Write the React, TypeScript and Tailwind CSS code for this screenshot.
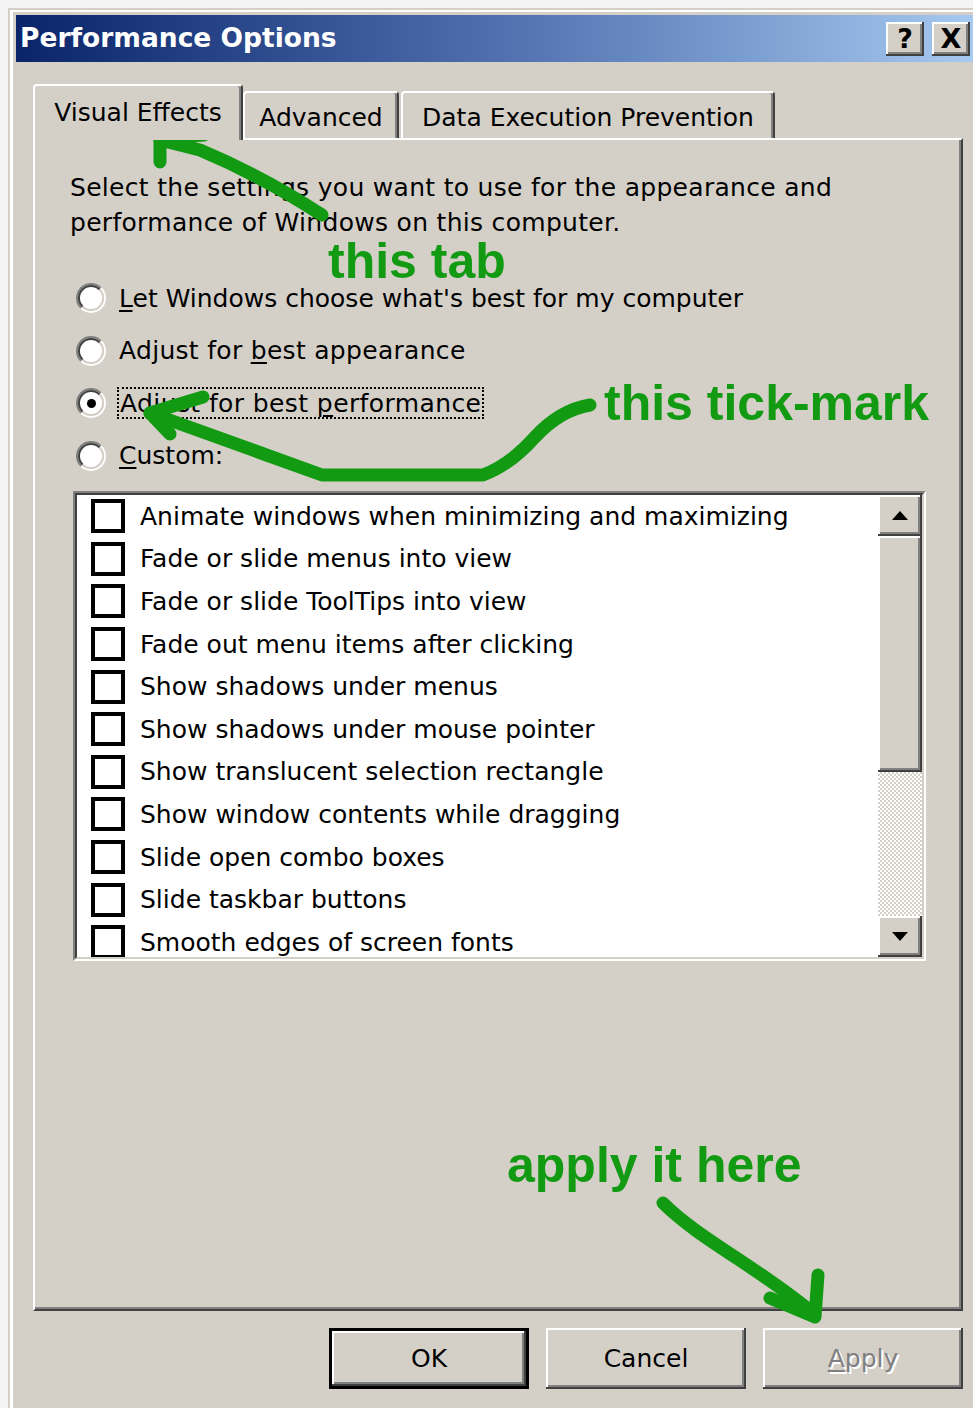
import React from "react";

const raised =
  "shadow-[inset_-2px_-2px_0_#404040,inset_2px_2px_0_#ffffff,inset_-4px_-4px_0_#808080]";

const effects = [
  "Animate windows when minimizing and maximizing",
  "Fade or slide menus into view",
  "Fade or slide ToolTips into view",
  "Fade out menu items after clicking",
  "Show shadows under menus",
  "Show shadows under mouse pointer",
  "Show translucent selection rectangle",
  "Show window contents while dragging",
  "Slide open combo boxes",
  "Slide taskbar buttons",
  "Smooth edges of screen fonts",
];

function Radio({ checked }: { checked?: boolean }) {
  return (
    <span className="flex h-[30px] w-[30px] shrink-0 rounded-full border-2 border-t-[#808080] border-l-[#808080] border-r-white border-b-white">
      <span className="flex h-full w-full items-center justify-center rounded-full border-2 border-t-[#404040] border-l-[#404040] border-r-[#d4d0c8] border-b-[#d4d0c8] bg-white">
        {checked && <span className="h-[9px] w-[9px] rounded-full bg-black" />}
      </span>
    </span>
  );
}

function Key({ children }: { children: React.ReactNode }) {
  return <span className="underline decoration-[2px] underline-offset-[3px]">{children}</span>;
}

function Arrow({ dir }: { dir: "up" | "down" }) {
  return (
    <svg width="16" height="9" viewBox="0 0 16 9">
      {dir === "up" ? <polygon points="0,9 16,9 8,0" fill="#000" /> : <polygon points="0,0 16,0 8,9" fill="#000" />}
    </svg>
  );
}

function Button({ label, primary, disabled }: { label: React.ReactNode; primary?: boolean; disabled?: boolean }) {
  return (
    <div
      className={`flex h-[61px] w-[200px] items-center justify-center bg-[#d4d0c8] ${raised} ${
        primary ? "border-[3px] border-black" : ""
      } ${disabled ? "text-[#808080] [text-shadow:2px_2px_0_#ffffff]" : ""}`}
    >
      {label}
    </div>
  );
}

export default function App() {
  return (
    <div className="relative h-[1408px] w-[973px] overflow-hidden bg-[#f3f3f3] pl-[8px] pt-[8px] font-['DejaVu_Sans',sans-serif] text-[25px] leading-none text-black">
      {/* window frame */}
      <div className="h-[1420px] w-[980px] bg-[#d4d0c8] pl-[2px] pt-[2px]">
        <div className="h-full border-l-[3px] border-t-[2px] border-white pl-[3px] pt-[3px]">
          <div className="w-[960px]">
            {/* title bar */}
            <div className="flex h-[47px] items-center justify-between bg-gradient-to-r from-[#0a246a] via-[#4f6fae] to-[#a6caf0] pl-[4px] pr-[6px]">
              <span className="text-[26.5px] font-bold text-white">Performance Options</span>
              <div className="flex gap-[8px]">
                <div className={`flex h-[34px] w-[38px] items-center justify-center bg-[#d4d0c8] text-[27px] font-bold ${raised}`}>
                  ?
                </div>
                <div className={`flex h-[34px] w-[38px] items-center justify-center bg-[#d4d0c8] text-[27px] font-bold ${raised}`}>
                  X
                </div>
              </div>
            </div>

            <div className="ml-[17px] w-[930px]">
              {/* tabs */}
              <div className="mt-[22px] flex h-[54px] items-end">
                <div className="relative z-10 -mb-[2px] flex h-[56px] w-[210px] items-center justify-center rounded-t-[4px] border-l-2 border-t-2 border-r-2 border-l-white border-t-white border-r-[#404040] bg-[#d4d0c8] pb-[2px] shadow-[inset_-2px_0_0_#808080]">
                  Visual Effects
                </div>
                <div className="flex h-[47px] w-[156px] items-center justify-center rounded-t-[4px] border-l-2 border-t-2 border-r-2 border-l-white border-t-white border-r-[#404040] pt-[4px] shadow-[inset_-2px_0_0_#808080]">
                  Advanced
                </div>
                <div className="ml-[2px] flex h-[47px] w-[374px] items-center justify-center rounded-t-[4px] border-l-2 border-t-2 border-r-2 border-l-white border-t-white border-r-[#404040] pt-[4px] shadow-[inset_-2px_0_0_#808080]">
                  Data Execution Prevention
                </div>
              </div>

              {/* tab page */}
              <div className="h-[1173px] border-2 border-t-white border-l-white border-r-[#404040] border-b-[#404040] pl-[35px] pt-[30px] shadow-[inset_-2px_-2px_0_#808080]">
                <div className="leading-[35px] tracking-[0.3px]">
                  <div>Select the settings you want to use for the appearance and</div>
                  <div>performance of Windows on this computer.</div>
                </div>

                <div className="mt-[32px]">
                  <div className="flex h-[52.5px] items-center pl-[6px]">
                    <Radio />
                    <span className="ml-[13px]">
                      <Key>L</Key>et Windows choose what's best for my computer
                    </span>
                  </div>
                  <div className="flex h-[52.5px] items-center pl-[6px]">
                    <Radio />
                    <span className="ml-[13px] tracking-[0.3px]">
                      Adjust for <Key>b</Key>est appearance
                    </span>
                  </div>
                  <div className="flex h-[52.5px] items-center pl-[6px]">
                    <Radio checked />
                    <span className="ml-[11px] flex h-[32px] items-center border-2 border-dotted border-black px-[1px] tracking-[0.4px]">
                      <span>
                        Adjust for best <Key>p</Key>erformance
                      </span>
                    </span>
                  </div>
                  <div className="flex h-[52.5px] items-center pl-[6px]">
                    <Radio />
                    <span className="ml-[13px]">
                      <Key>C</Key>ustom:
                    </span>
                  </div>
                </div>

                {/* effects list */}
                <div className="ml-[3px] mt-[9px] h-[470px] w-[853px] border-2 border-t-[#808080] border-l-[#808080] border-r-white border-b-white">
                  <div className="flex h-full w-full border-2 border-t-[#404040] border-l-[#404040] border-r-[#d4d0c8] border-b-[#d4d0c8] bg-white">
                    <div className="flex flex-1 flex-col overflow-hidden">
                      {effects.map((t) => (
                        <div key={t} className="flex h-[42.6px] shrink-0 items-center pl-[14px]">
                          <span className="h-[34px] w-[34px] shrink-0 border-[4px] border-black bg-white" />
                          <span className="ml-[15px] whitespace-nowrap">{t}</span>
                        </div>
                      ))}
                    </div>
                    <div className="flex w-[44px] flex-col">
                      <div className={`flex h-[41px] items-center justify-center bg-[#d4d0c8] ${raised}`}>
                        <Arrow dir="up" />
                      </div>
                      <div className={`h-[236px] bg-[#d4d0c8] ${raised}`} />
                      <div className="flex-1 bg-[repeating-conic-gradient(#d4d0c8_0_25%,#ffffff_0_50%)] bg-[length:4px_4px]" />
                      <div className={`flex h-[41px] items-center justify-center bg-[#d4d0c8] ${raised}`}>
                        <Arrow dir="down" />
                      </div>
                    </div>
                  </div>
                </div>
              </div>

              {/* dialog buttons */}
              <div className="mt-[17px] flex justify-end gap-[17px]">
                <Button label="OK" primary />
                <Button label="Cancel" />
                <Button
                  label={
                    <span>
                      <Key>A</Key>pply
                    </span>
                  }
                  disabled
                />
              </div>
            </div>
          </div>
        </div>
      </div>

      {/* green hand-drawn notes */}
      <svg
        className="pointer-events-none absolute left-0 top-0"
        width="973"
        height="1408"
        viewBox="0 0 973 1408"
        fill="none"
        stroke="#129a12"
        strokeWidth="13"
        strokeLinecap="round"
        strokeLinejoin="round"
      >
        <path d="M322 215 Q262 176 200 150 L160 140" />
        <path d="M204 135 L160 138 L160 162" />
        <path d="M590 405 Q560 410 535 437 Q510 465 483 475 L322 475 L150 413" />
        <path d="M203 397 L150 413 L170 434" />
        <path d="M663 1203 C700 1240 760 1268 814 1314" />
        <path d="M770 1298 L815 1317 L818 1275" />
      </svg>
      <div className="pointer-events-none absolute left-[328px] top-[236px] font-['Liberation_Sans',sans-serif] text-[50px] font-bold leading-[50px] text-[#129a12]">
        this tab
      </div>
      <div className="pointer-events-none absolute left-[604px] top-[378px] whitespace-nowrap font-['Liberation_Sans',sans-serif] text-[50px] font-bold leading-[50px] text-[#129a12]">
        this tick-mark
      </div>
      <div className="pointer-events-none absolute left-[507px] top-[1140px] whitespace-nowrap font-['Liberation_Sans',sans-serif] text-[50px] font-bold leading-[50px] text-[#129a12]">
        apply it here
      </div>
    </div>
  );
}
